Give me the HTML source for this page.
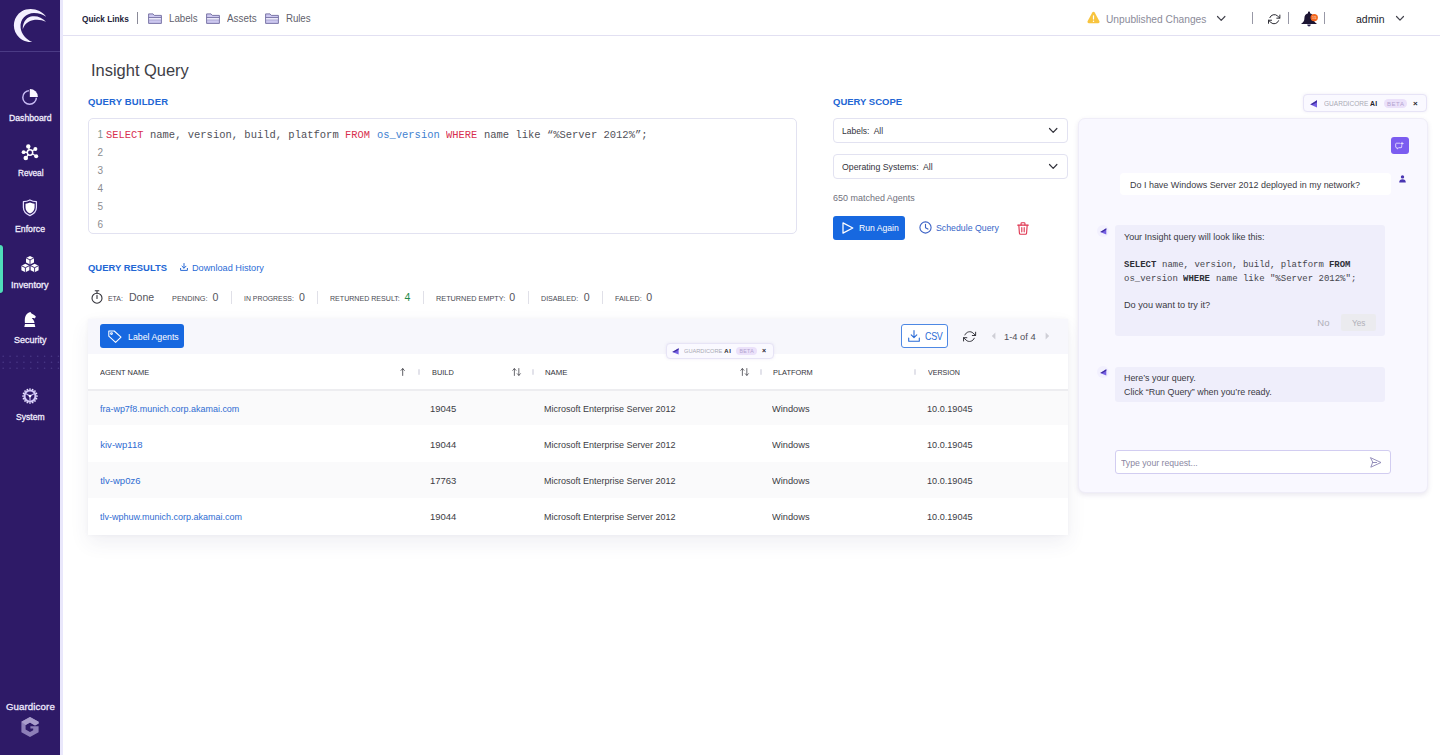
<!DOCTYPE html>
<html lang="en">
<head>
<meta charset="utf-8">
<title>Insight Query</title>
<style>
*{box-sizing:border-box;margin:0;padding:0}
html,body{width:1440px;height:755px;overflow:hidden;background:#fff}
body{font-family:"Liberation Sans",sans-serif;color:#3a3a44;font-size:9px;position:relative}
.t{position:absolute;white-space:pre;line-height:1;display:block;transform-origin:0 0}
.a{position:absolute}
svg{position:absolute;overflow:visible}
#side{position:absolute;left:0;top:0;width:60px;height:755px;background:#2e1a67}
#sidesh{position:absolute;left:60px;top:0;width:3px;height:755px;background:#e9e7fb}
#top{position:absolute;left:63px;top:0;width:1377px;height:36px;background:#fff;border-bottom:1px solid #e2e0f2}
.box{position:absolute;border:1px solid #e2e2f1;border-radius:4px;background:#fff}
.btn{position:absolute;background:#1768e0;border-radius:3px}
.sep{position:absolute;width:1px;background:#e0e0e8}
.row{position:absolute;left:88px;width:980px;height:36px}
</style>
</head>
<body>
<nav>
<div id="side">
<svg width="60" height="52" viewBox="0 0 60 52" style="left:0;top:0">
<path d="M46.2 16.8 C41 9.5 30 6.5 21.5 11.5 C13.5 16.5 11.5 27 17 35 C20.5 40 26.5 42.6 32.2 42 C26 39.5 21.3 34 20.6 27.5 C19.8 19 26 13 34 12.9 C38.8 12.9 43 14.4 46.2 16.8 Z" fill="#f4f0ff"/>
<path d="M46 21.8 C42 17.2 36 15.2 30.8 16.6 C25.5 18.2 22.4 23.6 22.8 29.6 C24 24.6 27.6 21.4 32.6 20.2 C37.4 19.2 42 19.8 46 21.8 Z" fill="#f4f0ff"/>
</svg>
<div class="a" style="left:0;top:51px;width:60px;height:1px;background:#4b3b85"></div>
<div class="a" style="left:0;top:245px;width:3.4px;height:47.5px;background:#4fdcba;border-radius:0 3px 3px 0;box-shadow:0 0 1.5px rgba(20,10,50,.8)"></div>
<svg width="20" height="20" viewBox="0 0 20 20" style="left:20px;top:87px">
<circle cx="9.6" cy="10.4" r="6.8" fill="none" stroke="#c9bcf5" stroke-width="1.45"/>
<path d="M9.8 2 A7.9 7.9 0 0 1 17.9 9.9 L9.8 9.9 Z" fill="#fbf8ff" stroke="#2e1a67" stroke-width="1.5" paint-order="stroke"/>
</svg>
<svg width="20" height="20" viewBox="0 0 20 20" style="left:20px;top:142px">
<g stroke="#fff" stroke-width="1.3" fill="none">
<line x1="10" y1="10.5" x2="8.3" y2="4.3"/><line x1="10" y1="10.5" x2="15.6" y2="6.8"/><line x1="10" y1="10.5" x2="16.5" y2="14.3"/><line x1="10" y1="10.5" x2="5.6" y2="16.2"/><line x1="10" y1="10.5" x2="3.3" y2="10.2"/>
</g>
<circle cx="10" cy="10.5" r="2.7" fill="#2e1a67" stroke="#fff" stroke-width="1.5"/>
<g fill="#fff"><circle cx="8.3" cy="4.4" r="2.2"/><circle cx="15.4" cy="7" r="2"/><circle cx="16.2" cy="14.2" r="2"/><circle cx="5.8" cy="16" r="2.3"/><circle cx="3.6" cy="10.2" r="1.9"/></g>
</svg>
<svg width="20" height="20" viewBox="0 0 20 20" style="left:20px;top:198px">
<path d="M9.9 2 C11.8 3 14 3.6 16.4 3.7 L16.4 9.6 C16.4 13.2 13.8 16 9.9 17.6 C6 16 3.4 13.2 3.4 9.6 L3.4 3.7 C5.8 3.6 8 3 9.9 2 Z" fill="none" stroke="#e6deff" stroke-width="1.25" stroke-linejoin="round"/>
<path d="M10 4.5 C11.4 5.2 13 5.6 14.6 5.7 L14.6 9.6 C14.6 12.2 12.9 14.3 10 15.6 C7.1 14.3 5.5 12.2 5.5 9.6 L5.5 5.7 C7 5.6 8.6 5.2 10 4.5 Z" fill="#fff"/>
</svg>
<svg width="22" height="20" viewBox="0 0 22 20" style="left:19px;top:254.6px"><path d="M7 2.9 l4 -2 l4 2 v4.6 l-4 2 l-4 -2 Z" fill="#fff"/><path d="M7 2.9 l4 2 l4 -2 M11 4.9 v4.6" fill="none" stroke="#2e1a67" stroke-width="0.9"/><path d="M2.4 10.7 l4 -2 l4 2 v4.6 l-4 2 l-4 -2 Z" fill="#fff"/><path d="M2.4 10.7 l4 2 l4 -2 M6.4 12.7 v4.6" fill="none" stroke="#2e1a67" stroke-width="0.9"/><path d="M11.6 10.7 l4 -2 l4 2 v4.6 l-4 2 l-4 -2 Z" fill="#fff"/><path d="M11.6 10.7 l4 2 l4 -2 M15.6 12.7 v4.6" fill="none" stroke="#2e1a67" stroke-width="0.9"/></svg>
<svg width="12" height="15.2" viewBox="0 0 12 15.2" style="left:24px;top:312px">
<path d="M6.4 0 L7.5 1.5 C9.5 2.3 11 3.5 11.9 4.8 L10.7 6.5 C9.7 6.2 8.7 6 7.8 6.2 C9.4 7.6 10.4 9.2 10.5 11 L0.9 11 C0.6 8 0.8 5.4 1.8 3.6 C2.8 1.8 4.4 0.6 6.4 0 Z" fill="#fff"/>
<path d="M1 11.9 H10.6 L11.3 15 H0.3 Z" fill="#fff"/>
</svg>
<svg width="60" height="20" viewBox="0 350 60 20" style="left:0;top:350px"><g fill="#4a3987"><circle cx="3.2" cy="356.3" r="0.8"/><circle cx="10.1" cy="356.3" r="0.8"/><circle cx="17" cy="356.3" r="0.8"/><circle cx="23.9" cy="356.3" r="0.8"/><circle cx="30.8" cy="356.3" r="0.8"/><circle cx="37.7" cy="356.3" r="0.8"/><circle cx="44.6" cy="356.3" r="0.8"/><circle cx="51.5" cy="356.3" r="0.8"/><circle cx="58.4" cy="356.3" r="0.8"/><circle cx="3.2" cy="362.3" r="0.8"/><circle cx="10.1" cy="362.3" r="0.8"/><circle cx="17" cy="362.3" r="0.8"/><circle cx="23.9" cy="362.3" r="0.8"/><circle cx="30.8" cy="362.3" r="0.8"/><circle cx="37.7" cy="362.3" r="0.8"/><circle cx="44.6" cy="362.3" r="0.8"/><circle cx="51.5" cy="362.3" r="0.8"/><circle cx="58.4" cy="362.3" r="0.8"/><circle cx="3.2" cy="368.3" r="0.8"/><circle cx="10.1" cy="368.3" r="0.8"/><circle cx="17" cy="368.3" r="0.8"/><circle cx="23.9" cy="368.3" r="0.8"/><circle cx="30.8" cy="368.3" r="0.8"/><circle cx="37.7" cy="368.3" r="0.8"/><circle cx="44.6" cy="368.3" r="0.8"/><circle cx="51.5" cy="368.3" r="0.8"/><circle cx="58.4" cy="368.3" r="0.8"/></g></svg>
<svg width="16" height="16" viewBox="0 0 16 16" style="left:22px;top:387.6px">
<g fill="#ece6ff"><circle cx="15.00" cy="8.00" r="0.85"/><circle cx="14.47" cy="10.68" r="0.85"/><circle cx="12.95" cy="12.95" r="0.85"/><circle cx="10.68" cy="14.47" r="0.85"/><circle cx="8.00" cy="15.00" r="0.85"/><circle cx="5.32" cy="14.47" r="0.85"/><circle cx="3.05" cy="12.95" r="0.85"/><circle cx="1.53" cy="10.68" r="0.85"/><circle cx="1.00" cy="8.00" r="0.85"/><circle cx="1.53" cy="5.32" r="0.85"/><circle cx="3.05" cy="3.05" r="0.85"/><circle cx="5.32" cy="1.53" r="0.85"/><circle cx="8.00" cy="1.00" r="0.85"/><circle cx="10.68" cy="1.53" r="0.85"/><circle cx="12.95" cy="3.05" r="0.85"/><circle cx="14.47" cy="5.32" r="0.85"/></g>
<circle cx="8" cy="8" r="5.5" fill="none" stroke="#d2c8f7" stroke-width="2.1"/>
<g stroke="#cbbff3" stroke-width="1.2"><line x1="8" y1="8" x2="4.02" y2="5.70"/><line x1="8" y1="8" x2="11.98" y2="5.70"/><line x1="8" y1="8" x2="8.00" y2="12.60"/></g>
<circle cx="8" cy="8" r="1.3" fill="#fff"/>
</svg>
<svg width="20" height="22" viewBox="0 0 20 22" style="left:20px;top:715.5px">
<path d="M10 1 L18.6 5.8 L18.6 7.6 L15 9.4 L10 6.6 L5.6 9 L5.6 13.6 L10 16 L13.2 14.2 L13.2 12.6 L10.4 12.6 L10.4 10.2 L18.6 10.2 L18.6 16.2 L10 21 L1.4 16.2 L1.4 5.8 Z" fill="#8d7fb8"/>
<path d="M10 1 L18.6 5.8 L18.6 7.6 L15 9.4 L10 6.6 L5.6 9 L1.4 5.8 Z" fill="#a99dcb"/>
</svg>
</div>
<div id="sidesh"></div>
<span id="t1" class="t" style="left:9.00px;top:113.00px;font-size:9.6px;color:#f3efff;transform:scaleX(0.9055);-webkit-text-stroke:0.3px #f3efff;">Dashboard</span>
<span id="t2" class="t" style="left:17.50px;top:168.00px;font-size:9.6px;color:#f3efff;letter-spacing:-0.045px;transform:scaleX(0.8600);-webkit-text-stroke:0.3px #f3efff;">Reveal</span>
<span id="t3" class="t" style="left:15.40px;top:224.00px;font-size:9.6px;color:#f3efff;transform:scaleX(0.9100);-webkit-text-stroke:0.3px #f3efff;">Enforce</span>
<span id="t4" class="t" style="left:11.20px;top:280.00px;font-size:9.6px;color:#f3efff;transform:scaleX(0.9552);-webkit-text-stroke:0.3px #f3efff;">Inventory</span>
<span id="t5" class="t" style="left:14.10px;top:335.00px;font-size:9.6px;color:#f3efff;transform:scaleX(0.9378);-webkit-text-stroke:0.3px #f3efff;">Security</span>
<span id="t6" class="t" style="left:15.80px;top:412.00px;font-size:9.6px;color:#f3efff;transform:scaleX(0.8937);-webkit-text-stroke:0.3px #f3efff;">System</span>
<span id="t7" class="t" style="left:5.90px;top:702.00px;font-size:9.7px;color:#efeaff;letter-spacing:0.107px;-webkit-text-stroke:0.3px #efeaff;">Guardicore</span>
</nav>
<header>
<div id="top"></div>
<span id="t8" class="t" style="left:81.80px;top:14.00px;font-size:9.4px;color:#23233a;font-weight:bold;transform:scaleX(0.8804);">Quick Links</span>
<div class="a" style="left:137px;top:12px;width:1px;height:11.5px;background:#8a8a98"></div>
<svg width="14" height="11" viewBox="0 0 14 11" style="left:148px;top:12.5px">
<path d="M0.6 10.4 V0.9 H5 L6.3 2.4 H13.4 V10.4 Z" fill="#cdc8f0" stroke="#6f6a9e" stroke-width="0.9" stroke-linejoin="round"/>
<path d="M0.6 4.6 H13.4" stroke="#6f6a9e" stroke-width="0.9"/>
<path d="M1.1 5.1 H12.9 V6.6 H1.1 Z" fill="#f1effb"/>
<path d="M0.6 7 H13.4" stroke="#8d88b8" stroke-width="0.5"/>
</svg>
<span id="t9" class="t" style="left:169.40px;top:13.00px;font-size:11.3px;color:#5f5f6c;letter-spacing:-0.008px;transform:scaleX(0.8600);">Labels</span>
<svg width="14" height="11" viewBox="0 0 14 11" style="left:206px;top:12.5px">
<path d="M0.6 10.4 V0.9 H5 L6.3 2.4 H13.4 V10.4 Z" fill="#cdc8f0" stroke="#6f6a9e" stroke-width="0.9" stroke-linejoin="round"/>
<path d="M0.6 4.6 H13.4" stroke="#6f6a9e" stroke-width="0.9"/>
<path d="M1.1 5.1 H12.9 V6.6 H1.1 Z" fill="#f1effb"/>
<path d="M0.6 7 H13.4" stroke="#8d88b8" stroke-width="0.5"/>
</svg>
<span id="t10" class="t" style="left:227.10px;top:13.00px;font-size:11.3px;color:#5f5f6c;transform:scaleX(0.8730);">Assets</span>
<svg width="14" height="11" viewBox="0 0 14 11" style="left:265.3px;top:12.5px">
<path d="M0.6 10.4 V0.9 H5 L6.3 2.4 H13.4 V10.4 Z" fill="#cdc8f0" stroke="#6f6a9e" stroke-width="0.9" stroke-linejoin="round"/>
<path d="M0.6 4.6 H13.4" stroke="#6f6a9e" stroke-width="0.9"/>
<path d="M1.1 5.1 H12.9 V6.6 H1.1 Z" fill="#f1effb"/>
<path d="M0.6 7 H13.4" stroke="#8d88b8" stroke-width="0.5"/>
</svg>
<span id="t11" class="t" style="left:286.20px;top:13.00px;font-size:11.3px;color:#5f5f6c;letter-spacing:-0.101px;transform:scaleX(0.8600);">Rules</span>
<svg width="13" height="13" viewBox="0 0 13 13" style="left:1087px;top:11.3px">
<path d="M6.5 0.8 C7 0.8 7.4 1.1 7.7 1.6 L12.3 10 C12.9 11.1 12.3 12.2 11.1 12.2 H1.9 C0.7 12.2 0.1 11.1 0.7 10 L5.3 1.6 C5.6 1.1 6 0.8 6.5 0.8 Z" fill="#f8c43e"/>
<rect x="5.9" y="4.2" width="1.2" height="4.4" rx="0.6" fill="#fff"/><circle cx="6.5" cy="10.2" r="0.75" fill="#fff"/>
</svg>
<span id="t12" class="t" style="left:1105.50px;top:14.00px;font-size:11.3px;color:#8b8b99;transform:scaleX(0.9031);">Unpublished Changes</span>
<svg width="8.4" height="4.8" viewBox="0 0 8.4 4.8" style="left:1217px;top:15.6px"><path d="M0.5 0.5 L4.2 4.3 L7.9 0.5" fill="none" stroke="#44444e" stroke-width="1.2" stroke-linecap="round" stroke-linejoin="round"/></svg>
<div class="a" style="left:1252px;top:12px;width:1px;height:11.8px;background:#9898a6"></div>
<svg width="12.4" height="12.4" viewBox="0 0 24 24" style="left:1268.3px;top:13.2px">
<g fill="none" stroke="#2b2b33" stroke-width="1.93548" stroke-linecap="round" stroke-linejoin="round">
<path d="M23 4 V10 H17"/><path d="M1 20 V14 H7"/>
<path d="M3.51 9 A9 9 0 0 1 18.36 5.64 L23 10 M1 14 L5.64 18.36 A9 9 0 0 0 20.49 15"/>
</g></svg>
<div class="a" style="left:1288px;top:12px;width:1px;height:11.8px;background:#9898a6"></div>
<svg width="18" height="16" viewBox="0 0 18 16" style="left:1300.5px;top:10.6px">
<path d="M8 0.6 C8.6 0.6 9 1 9 1.6 V2.2 C11.4 2.8 12.6 4.8 12.6 7.2 C12.6 9.6 13.4 11 15.6 12.4 V13 H0.4 V12.4 C2.6 11 3.4 9.6 3.4 7.2 C3.4 4.8 4.6 2.8 7 2.2 V1.6 C7 1 7.4 0.6 8 0.6 Z" fill="#1c1533"/>
<path d="M6.2 13.6 H9.8 C9.8 14.7 9 15.4 8 15.4 C7 15.4 6.2 14.7 6.2 13.6 Z" fill="#2b2350"/>
<circle cx="13.2" cy="6.6" r="3.7" fill="#f2661f"/>
</svg>
<span id="t13" class="t" style="left:1311.80px;top:16.00px;font-size:4.2px;color:#ffc4a0;font-weight:bold;transform:scaleX(0.9204);">15</span>
<div class="a" style="left:1324px;top:12px;width:1px;height:11.8px;background:#9898a6"></div>
<span id="t14" class="t" style="left:1356.00px;top:14.00px;font-size:11.3px;color:#23232b;transform:scaleX(0.9259);">admin</span>
<svg width="8" height="4.6" viewBox="0 0 8 4.6" style="left:1395.6px;top:15.6px"><path d="M0.5 0.5 L4 4.1 L7.5 0.5" fill="none" stroke="#44444e" stroke-width="1.2" stroke-linecap="round" stroke-linejoin="round"/></svg>
</header>
<main>
<section>
<span id="t15" class="t" style="left:91.00px;top:62.00px;font-size:17px;color:#3e3e46;transform:scaleX(0.9673);">Insight Query</span>
<span id="t16" class="t" style="left:88.00px;top:97.00px;font-size:9.5px;color:#2266d4;font-weight:bold;letter-spacing:0.156px;">QUERY BUILDER</span>
<div class="box" style="left:88px;top:118px;width:709px;height:116px;border-radius:5px;border-color:#e2e2f1"></div>
<span id="t17" class="t" style="left:97.40px;top:130.00px;font-size:10px;color:#7b9690;">1</span>
<span id="t18" class="t" style="left:97.40px;top:148.00px;font-size:10px;color:#8c8c90;">2</span>
<span id="t19" class="t" style="left:97.40px;top:166.00px;font-size:10px;color:#8c8c90;">3</span>
<span id="t20" class="t" style="left:97.40px;top:184.00px;font-size:10px;color:#8c8c90;">4</span>
<span id="t21" class="t" style="left:97.40px;top:202.00px;font-size:10px;color:#8c8c90;">5</span>
<span id="t22" class="t" style="left:97.40px;top:220.00px;font-size:10px;color:#8c8c90;">6</span>
<span id="t23" class="t" style="left:105.80px;top:130.00px;font-size:10.5px;color:#d82f4f;font-family:'Liberation Mono',monospace;transform:scaleX(0.9917);">SELECT</span>
<span id="t24" class="t" style="left:149.90px;top:130.00px;font-size:10.5px;color:#505058;font-family:'Liberation Mono',monospace;transform:scaleX(0.9982);">name, version, build, platform</span>
<span id="t25" class="t" style="left:345.20px;top:130.00px;font-size:10.5px;color:#d82f4f;font-family:'Liberation Mono',monospace;transform:scaleX(0.9874);">FROM</span>
<span id="t26" class="t" style="left:376.70px;top:130.00px;font-size:10.5px;color:#3f7fd0;font-family:'Liberation Mono',monospace;transform:scaleX(0.9950);">os_version</span>
<span id="t27" class="t" style="left:446.00px;top:130.00px;font-size:10.5px;color:#d82f4f;font-family:'Liberation Mono',monospace;transform:scaleX(0.9900);">WHERE</span>
<span id="t28" class="t" style="left:483.80px;top:130.00px;font-size:10.5px;color:#505058;font-family:'Liberation Mono',monospace;transform:scaleX(0.9980);">name like “%Server 2012%”;</span>
<span id="t29" class="t" style="left:832.90px;top:97.00px;font-size:9.5px;color:#2266d4;font-weight:bold;transform:scaleX(0.9990);">QUERY SCOPE</span>
<div class="box" style="left:833px;top:118px;width:235px;height:25px"></div>
<span id="t30" class="t" style="left:841.90px;top:126.00px;font-size:9.5px;color:#33333c;transform:scaleX(0.8944);">Labels:  All</span>
<svg width="8.4" height="4.8" viewBox="0 0 8.4 4.8" style="left:1049px;top:128.2px"><path d="M0.5 0.5 L4.2 4.3 L7.9 0.5" fill="none" stroke="#33333c" stroke-width="1.2" stroke-linecap="round" stroke-linejoin="round"/></svg>
<div class="box" style="left:833px;top:154px;width:235px;height:25px"></div>
<span id="t31" class="t" style="left:841.90px;top:162.00px;font-size:9.5px;color:#33333c;transform:scaleX(0.9176);">Operating Systems:  All</span>
<svg width="8.4" height="4.8" viewBox="0 0 8.4 4.8" style="left:1049px;top:164.2px"><path d="M0.5 0.5 L4.2 4.3 L7.9 0.5" fill="none" stroke="#33333c" stroke-width="1.2" stroke-linecap="round" stroke-linejoin="round"/></svg>
<span id="t32" class="t" style="left:832.90px;top:193.00px;font-size:9.5px;color:#70707c;transform:scaleX(0.9443);">650 matched Agents</span>
<div class="btn" style="left:832.5px;top:216px;width:72px;height:24px"></div>
<svg width="12" height="12" viewBox="0 0 12 12" style="left:841.6px;top:222.2px"><path d="M1 0.9 L10.8 6 L1 11.1 Z" fill="none" stroke="#fff" stroke-width="1.25" stroke-linejoin="round"/></svg>
<span id="t33" class="t" style="left:858.50px;top:223.00px;font-size:9.5px;color:#fff;transform:scaleX(0.9078);">Run Again</span>
<svg width="13" height="13" viewBox="0 0 13 13" style="left:918.8px;top:221.4px"><circle cx="6.5" cy="6.5" r="5.6" fill="none" stroke="#3d63c6" stroke-width="1.1"/><path d="M6.5 3.2 V6.7 L8.9 8.1" fill="none" stroke="#3d63c6" stroke-width="1.1" stroke-linecap="round" stroke-linejoin="round"/></svg>
<span id="t34" class="t" style="left:936.30px;top:223.00px;font-size:9.5px;color:#3565c8;transform:scaleX(0.9218);">Schedule Query</span>
<svg width="12" height="13" viewBox="0 0 13 14" style="left:1017.2px;top:221.8px">
<g fill="none" stroke="#df3550" stroke-width="1.2" stroke-linecap="round" stroke-linejoin="round">
<path d="M0.8 3.4 H12.2"/><path d="M4.4 3.2 V1.6 C4.4 1.1 4.7 0.8 5.2 0.8 H7.8 C8.3 0.8 8.6 1.1 8.6 1.6 V3.2"/>
<path d="M2 3.6 L2.6 12 C2.65 12.8 3.1 13.2 3.9 13.2 H9.1 C9.9 13.2 10.35 12.8 10.4 12 L11 3.6"/>
<path d="M5.2 6 V10.6 M7.8 6 V10.6"/></g></svg>
<span id="t35" class="t" style="left:88.00px;top:263.00px;font-size:9.5px;color:#2266d4;font-weight:bold;transform:scaleX(0.9933);">QUERY RESULTS</span>
<svg width="8" height="8" viewBox="0 0 8 8" style="left:179.6px;top:263.4px"><g fill="none" stroke="#2a6bd6" stroke-width="1" stroke-linecap="round" stroke-linejoin="round"><path d="M4 0.5 V5 M2 3.2 L4 5.2 L6 3.2"/><path d="M0.6 5.4 V7.4 H7.4 V5.4"/></g></svg>
<span id="t36" class="t" style="left:192.00px;top:263.00px;font-size:9.5px;color:#2a6bd6;transform:scaleX(0.9644);">Download History</span>
<svg width="12" height="14" viewBox="0 0 12 14" style="left:90.6px;top:290.2px"><g fill="none" stroke="#33333b" stroke-width="1.1" stroke-linecap="round">
<circle cx="6" cy="8.2" r="5"/><path d="M4.2 0.8 H7.8 M6 1 V3 M6 5.4 V8.4"/></g></svg>
<span id="t37" class="t" style="left:108.40px;top:295.00px;font-size:7.8px;color:#4a4a52;transform:scaleX(0.8887);">ETA:</span>
<span id="t38" class="t" style="left:128.80px;top:292.00px;font-size:10.6px;color:#55555c;transform:scaleX(0.9949);">Done</span>
<span id="t39" class="t" style="left:172.00px;top:295.00px;font-size:7.8px;color:#4a4a52;transform:scaleX(0.9442);">PENDING:</span>
<span id="t40" class="t" style="left:212.60px;top:292.00px;font-size:10.6px;color:#55555c;">0</span>
<div class="sep" style="left:231.2px;top:291px;height:12.5px"></div>
<span id="t41" class="t" style="left:243.80px;top:295.00px;font-size:7.8px;color:#4a4a52;transform:scaleX(0.8841);">IN PROGRESS:</span>
<span id="t42" class="t" style="left:298.90px;top:292.00px;font-size:10.6px;color:#55555c;">0</span>
<div class="sep" style="left:317.3px;top:291px;height:12.5px"></div>
<span id="t43" class="t" style="left:330.00px;top:295.00px;font-size:7.8px;color:#4a4a52;transform:scaleX(0.9069);">RETURNED RESULT:</span>
<span id="t44" class="t" style="left:404.50px;top:292.00px;font-size:10.6px;color:#1f8a4c;">4</span>
<div class="sep" style="left:422.8px;top:291px;height:12.5px"></div>
<span id="t45" class="t" style="left:435.50px;top:295.00px;font-size:7.8px;color:#4a4a52;transform:scaleX(0.9355);">RETURNED EMPTY:</span>
<span id="t46" class="t" style="left:509.30px;top:292.00px;font-size:10.6px;color:#55555c;">0</span>
<div class="sep" style="left:527.8px;top:291px;height:12.5px"></div>
<span id="t47" class="t" style="left:540.80px;top:295.00px;font-size:7.8px;color:#4a4a52;transform:scaleX(0.9132);">DISABLED:</span>
<span id="t48" class="t" style="left:583.80px;top:292.00px;font-size:10.6px;color:#55555c;">0</span>
<div class="sep" style="left:602px;top:291px;height:12.5px"></div>
<span id="t49" class="t" style="left:615.00px;top:295.00px;font-size:7.8px;color:#4a4a52;transform:scaleX(0.9226);">FAILED:</span>
<span id="t50" class="t" style="left:646.30px;top:292.00px;font-size:10.6px;color:#55555c;">0</span>
</section>
<section>
<div class="a" style="left:88px;top:318.5px;width:980px;height:216px;background:#fff;box-shadow:0 8px 18px rgba(60,60,110,.08),0 0 4px rgba(60,60,110,.04)"></div>
<div class="a" style="left:88px;top:318.5px;width:980px;height:35.5px;background:#f7f7fc"></div>
<div class="a" style="left:88px;top:389.4px;width:980px;height:1.4px;background:#ededf0"></div>
<div class="row" style="top:390.8px;height:34.4px;background:#fafafb"></div>
<div class="row" style="top:462px;background:#fafafb"></div>
<div class="btn" style="left:100px;top:324.2px;width:84px;height:23.8px"></div>
<svg width="14" height="13" viewBox="0 0 14 13" style="left:107.8px;top:329.6px"><g fill="none" stroke="#fff" stroke-width="1.05" stroke-linejoin="round"><path d="M0.8 1 H6.2 L13 7.2 L7.6 12.4 L0.8 6.2 Z"/><circle cx="3.5" cy="3.6" r="0.9"/></g></svg>
<span id="t51" class="t" style="left:127.50px;top:332.00px;font-size:9.5px;color:#fff;transform:scaleX(0.9238);">Label Agents</span>
<div class="a" style="left:900.7px;top:324.2px;width:47.5px;height:24px;background:#fff;border:1px solid #4d88e4;border-radius:3px"></div>
<svg width="12" height="12" viewBox="0 0 12 12" style="left:908.2px;top:330.2px"><g fill="none" stroke="#2a6bd6" stroke-width="1.1" stroke-linecap="round" stroke-linejoin="round"><path d="M6 0.6 V7.4 M3.2 4.8 L6 7.6 L8.8 4.8"/><path d="M0.7 8 V11.3 H11.3 V8"/></g></svg>
<span id="t52" class="t" style="left:924.90px;top:332.00px;font-size:10.4px;color:#2a6bd6;letter-spacing:-0.339px;transform:scaleX(0.8600);">CSV</span>
<svg width="13.2" height="13.2" viewBox="0 0 24 24" style="left:963.3px;top:329.5px">
<g fill="none" stroke="#2b2b33" stroke-width="1.72727" stroke-linecap="round" stroke-linejoin="round">
<path d="M23 4 V10 H17"/><path d="M1 20 V14 H7"/>
<path d="M3.51 9 A9 9 0 0 1 18.36 5.64 L23 10 M1 14 L5.64 18.36 A9 9 0 0 0 20.49 15"/>
</g></svg>
<svg width="5" height="8" viewBox="0 0 5 8" style="left:991.4px;top:332px"><path d="M4.4 0.6 L0.8 4 L4.4 7.4 Z" fill="#cfcfd6"/></svg>
<span id="t53" class="t" style="left:1004.40px;top:332.00px;font-size:9.5px;color:#50505a;transform:scaleX(0.9839);">1-4 of 4</span>
<svg width="5" height="8" viewBox="0 0 5 8" style="left:1044.6px;top:332px"><path d="M0.6 0.6 L4.2 4 L0.6 7.4 Z" fill="#cfcfd6"/></svg>
<span id="t54" class="t" style="left:100.00px;top:369.00px;font-size:8.1px;color:#33333b;transform:scaleX(0.9199);">AGENT NAME</span>
<svg width="5.4" height="8" viewBox="0 0 6 9" style="left:399.6px;top:368px"><g fill="none" stroke="#33333b" stroke-width="0.9" stroke-linecap="round" stroke-linejoin="round"><path d="M3 8.4 V0.8 M1.1 2.7 L3 0.7 L4.9 2.7"/></g></svg>
<div class="a" style="left:418.2px;top:368.6px;width:1.6px;height:6px;background:#e2e2ea;border-radius:1px"></div>
<span id="t55" class="t" style="left:431.90px;top:369.00px;font-size:8.1px;color:#33333b;transform:scaleX(0.9143);">BUILD</span>
<svg width="9.4" height="8" viewBox="0 0 10 9" style="left:512px;top:368px"><g fill="none" stroke="#3b3b43" stroke-width="0.85" stroke-linecap="round" stroke-linejoin="round"><path d="M2.4 8.4 V0.8 M0.6 2.6 L2.4 0.7 L4.2 2.6"/><path d="M7.4 0.6 V8.2 M5.6 6.4 L7.4 8.3 L9.2 6.4"/></g></svg>
<div class="a" style="left:532px;top:368.6px;width:1.6px;height:6px;background:#e2e2ea;border-radius:1px"></div>
<span id="t56" class="t" style="left:545.20px;top:369.00px;font-size:8.1px;color:#33333b;transform:scaleX(0.9619);">NAME</span>
<svg width="9.4" height="8" viewBox="0 0 10 9" style="left:740.2px;top:368px"><g fill="none" stroke="#3b3b43" stroke-width="0.85" stroke-linecap="round" stroke-linejoin="round"><path d="M2.4 8.4 V0.8 M0.6 2.6 L2.4 0.7 L4.2 2.6"/><path d="M7.4 0.6 V8.2 M5.6 6.4 L7.4 8.3 L9.2 6.4"/></g></svg>
<div class="a" style="left:760px;top:368.6px;width:1.6px;height:6px;background:#e2e2ea;border-radius:1px"></div>
<span id="t57" class="t" style="left:773.40px;top:369.00px;font-size:8.1px;color:#33333b;transform:scaleX(0.9133);">PLATFORM</span>
<div class="a" style="left:914.2px;top:368.6px;width:1.6px;height:6px;background:#e2e2ea;border-radius:1px"></div>
<span id="t58" class="t" style="left:927.80px;top:369.00px;font-size:8.1px;color:#33333b;transform:scaleX(0.8782);">VERSION</span>
<span id="t59" class="t" style="left:100.20px;top:404.00px;font-size:9.5px;color:#2f6cd2;transform:scaleX(0.9422);">fra-wp7f8.munich.corp.akamai.com</span>
<span id="t60" class="t" style="left:430.10px;top:404.00px;font-size:9.5px;color:#3c3c44;transform:scaleX(0.9992);">19045</span>
<span id="t61" class="t" style="left:544.00px;top:404.00px;font-size:9.5px;color:#3c3c44;transform:scaleX(0.9476);">Microsoft Enterprise Server 2012</span>
<span id="t62" class="t" style="left:772.20px;top:404.00px;font-size:9.5px;color:#3c3c44;transform:scaleX(0.9754);">Windows</span>
<span id="t63" class="t" style="left:926.70px;top:404.00px;font-size:9.5px;color:#3c3c44;transform:scaleX(0.9591);">10.0.19045</span>
<span id="t64" class="t" style="left:100.20px;top:440.00px;font-size:9.5px;color:#2f6cd2;letter-spacing:0.028px;">kiv-wp118</span>
<span id="t65" class="t" style="left:430.10px;top:440.00px;font-size:9.5px;color:#3c3c44;transform:scaleX(0.9992);">19044</span>
<span id="t66" class="t" style="left:544.00px;top:440.00px;font-size:9.5px;color:#3c3c44;transform:scaleX(0.9476);">Microsoft Enterprise Server 2012</span>
<span id="t67" class="t" style="left:772.20px;top:440.00px;font-size:9.5px;color:#3c3c44;transform:scaleX(0.9754);">Windows</span>
<span id="t68" class="t" style="left:926.70px;top:440.00px;font-size:9.5px;color:#3c3c44;transform:scaleX(0.9591);">10.0.19045</span>
<span id="t69" class="t" style="left:100.20px;top:476.00px;font-size:9.5px;color:#2f6cd2;letter-spacing:0.022px;">tlv-wp0z6</span>
<span id="t70" class="t" style="left:430.10px;top:476.00px;font-size:9.5px;color:#3c3c44;transform:scaleX(0.9992);">17763</span>
<span id="t71" class="t" style="left:544.00px;top:476.00px;font-size:9.5px;color:#3c3c44;transform:scaleX(0.9476);">Microsoft Enterprise Server 2012</span>
<span id="t72" class="t" style="left:772.20px;top:476.00px;font-size:9.5px;color:#3c3c44;transform:scaleX(0.9754);">Windows</span>
<span id="t73" class="t" style="left:926.70px;top:476.00px;font-size:9.5px;color:#3c3c44;transform:scaleX(0.9591);">10.0.19045</span>
<span id="t74" class="t" style="left:100.20px;top:512.00px;font-size:9.5px;color:#2f6cd2;transform:scaleX(0.9463);">tlv-wphuw.munich.corp.akamai.com</span>
<span id="t75" class="t" style="left:430.10px;top:512.00px;font-size:9.5px;color:#3c3c44;transform:scaleX(0.9992);">19044</span>
<span id="t76" class="t" style="left:544.00px;top:512.00px;font-size:9.5px;color:#3c3c44;transform:scaleX(0.9476);">Microsoft Enterprise Server 2012</span>
<span id="t77" class="t" style="left:772.20px;top:512.00px;font-size:9.5px;color:#3c3c44;transform:scaleX(0.9754);">Windows</span>
<span id="t78" class="t" style="left:926.70px;top:512.00px;font-size:9.5px;color:#3c3c44;transform:scaleX(0.9591);">10.0.19045</span>
<div class="a" style="left:665.6px;top:343px;width:108.6px;height:16.2px;background:#faf9ff;border:1px solid #e7e4f6;border-radius:4px;box-shadow:0 0 3px rgba(120,110,180,.12)"></div>
<svg width="7.2" height="6.8" viewBox="0 0 8 8" preserveAspectRatio="none" style="left:672px;top:347.5px"><path d="M0.3 4.6 L7.4 0.3 L7.4 7.7 Z" fill="#7660e4"/><path d="M0.3 4.6 L7.4 0.3 L7.4 2.2 L2.6 4.9 Z" fill="#3f2e9e"/></svg>
<span id="t79" class="t" style="left:684.20px;top:349.00px;font-size:5.9px;color:#a9a9b4;transform:scaleX(0.9590);">GUARDICORE</span>
<span id="t80" class="t" style="left:724.20px;top:349.00px;font-size:5.9px;color:#23232b;font-weight:bold;letter-spacing:0.794px;">AI</span>
<div class="a" style="left:736.2px;top:346.8px;width:20.6px;height:8px;background:#ebe1fa;border-radius:4px"></div>
<span id="t81" class="t" style="left:739.40px;top:349.00px;font-size:5.2px;color:#b3a3cf;letter-spacing:0.376px;">BETA</span>
<span id="t82" class="t" style="left:762.00px;top:347.00px;font-size:7px;color:#23232b;font-weight:bold;">×</span>
</section>
</main>
<aside>
<div class="a" style="left:1303px;top:94px;width:123.5px;height:18px;background:#faf9ff;border:1px solid #e7e4f6;border-radius:4px;box-shadow:0 0 3px rgba(120,110,180,.12)"></div>
<svg width="7.6" height="7.8" viewBox="0 0 8 8" preserveAspectRatio="none" style="left:1310px;top:99.6px"><path d="M0.3 4.6 L7.4 0.3 L7.4 7.7 Z" fill="#7660e4"/><path d="M0.3 4.6 L7.4 0.3 L7.4 2.2 L2.6 4.9 Z" fill="#3f2e9e"/></svg>
<span id="t83" class="t" style="left:1323.70px;top:101.00px;font-size:6.8px;color:#a9a9b4;transform:scaleX(0.9614);">GUARDICORE</span>
<span id="t84" class="t" style="left:1369.90px;top:101.00px;font-size:6.8px;color:#23232b;font-weight:bold;letter-spacing:0.487px;">AI</span>
<div class="a" style="left:1384px;top:99.4px;width:23px;height:8.6px;background:#ebe1fa;border-radius:4.3px"></div>
<span id="t85" class="t" style="left:1387.00px;top:101.00px;font-size:6px;color:#b3a3cf;letter-spacing:0.555px;">BETA</span>
<span id="t86" class="t" style="left:1413.00px;top:100.00px;font-size:8px;color:#23232b;font-weight:bold;">×</span>
<div class="a" style="left:1078px;top:118px;width:349.5px;height:374.5px;background:#f9f8ff;border:1px solid #efedf8;border-radius:7px;box-shadow:0 2px 5px rgba(70,60,120,.12)"></div>
<div class="a" style="left:1390.8px;top:136.6px;width:17.8px;height:17.8px;background:#7b5cf0;border-radius:3px"></div>
<svg width="9" height="8" viewBox="0 0 9 8" style="left:1395.4px;top:141.6px"><g fill="none" stroke="#f1ecff" stroke-width="0.8" stroke-linejoin="round" stroke-linecap="round"><path d="M4.6 1.2 H1.4 C1 1.2 0.7 1.5 0.7 1.9 V5 C0.7 5.4 1 5.7 1.4 5.7 H2.2 V7 L3.8 5.7 H6 C6.4 5.7 6.7 5.4 6.7 5 V3.6"/><path d="M7 0.3 V2.7 M5.8 1.5 H8.2"/></g></svg>
<div class="a" style="left:1120.2px;top:172.8px;width:270.8px;height:22.5px;background:#fff;border-radius:4px"></div>
<span id="t87" class="t" style="left:1129.50px;top:180.00px;font-size:9.5px;color:#3a3a44;transform:scaleX(0.9427);">Do I have Windows Server 2012 deployed in my network?</span>
<svg width="7" height="8" viewBox="0 0 7 8" style="left:1399.3px;top:175px"><circle cx="3.5" cy="1.9" r="1.7" fill="#4a36b2"/><path d="M0.2 7.6 C0.2 5.2 1.6 4.2 3.5 4.2 C5.4 4.2 6.8 5.2 6.8 7.6 Z" fill="#4a36b2"/></svg>
<div class="a" style="left:1114.6px;top:225.3px;width:270.5px;height:110.7px;background:#efeefb;border-radius:3px"></div>
<div class="a" style="left:1096.8px;top:225.2px;width:12px;height:12px;border-radius:6px;background:#f2f0fe"></div>
<svg width="6.8" height="6.8" viewBox="0 0 8 8" preserveAspectRatio="none" style="left:1099.5px;top:227.9px"><path d="M0.3 4.6 L7.4 0.3 L7.4 7.7 Z" fill="#7660e4"/><path d="M0.3 4.6 L7.4 0.3 L7.4 2.2 L2.6 4.9 Z" fill="#3f2e9e"/></svg>
<span id="t88" class="t" style="left:1124.00px;top:232.00px;font-size:9.5px;color:#3a3a44;transform:scaleX(0.9424);">Your Insight query will look like this:</span>
<span id="t89" class="t" style="left:1124.00px;top:261.00px;font-size:9px;color:#2e2e36;font-weight:bold;font-family:'Liberation Mono',monospace;transform:scaleX(0.9967);">SELECT</span>
<span id="t90" class="t" style="left:1161.80px;top:261.00px;font-size:9px;color:#46464e;font-family:'Liberation Mono',monospace;transform:scaleX(0.9992);">name, version, build, platform</span>
<span id="t91" class="t" style="left:1329.20px;top:261.00px;font-size:9px;color:#2e2e36;font-weight:bold;font-family:'Liberation Mono',monospace;transform:scaleX(0.9949);">FROM</span>
<span id="t92" class="t" style="left:1124.00px;top:275.00px;font-size:9px;color:#46464e;font-family:'Liberation Mono',monospace;transform:scaleX(0.9979);">os_version</span>
<span id="t93" class="t" style="left:1183.40px;top:275.00px;font-size:9px;color:#2e2e36;font-weight:bold;font-family:'Liberation Mono',monospace;transform:scaleX(0.9957);">WHERE</span>
<span id="t94" class="t" style="left:1215.80px;top:275.00px;font-size:9px;color:#46464e;font-family:'Liberation Mono',monospace;transform:scaleX(0.9990);">name like "%Server 2012%";</span>
<span id="t95" class="t" style="left:1124.00px;top:300.00px;font-size:9.5px;color:#3a3a44;transform:scaleX(0.9649);">Do you want to try it?</span>
<span id="t96" class="t" style="left:1317.30px;top:318.00px;font-size:9.5px;color:#b0b0b8;letter-spacing:0.144px;">No</span>
<div class="a" style="left:1341.3px;top:314.4px;width:34.3px;height:16.5px;background:#ebebef;border-radius:2px"></div>
<span id="t97" class="t" style="left:1352.20px;top:318.00px;font-size:9.5px;color:#b0b0b8;transform:scaleX(0.8645);">Yes</span>
<div class="a" style="left:1114.6px;top:366.5px;width:270.3px;height:35.5px;background:#efeefb;border-radius:3px"></div>
<div class="a" style="left:1096.9px;top:366.1px;width:12px;height:12px;border-radius:6px;background:#f2f0fe"></div>
<svg width="6.8" height="6.8" viewBox="0 0 8 8" preserveAspectRatio="none" style="left:1099.6px;top:368.8px"><path d="M0.3 4.6 L7.4 0.3 L7.4 7.7 Z" fill="#7660e4"/><path d="M0.3 4.6 L7.4 0.3 L7.4 2.2 L2.6 4.9 Z" fill="#3f2e9e"/></svg>
<span id="t98" class="t" style="left:1123.50px;top:373.00px;font-size:9.5px;color:#3a3a44;transform:scaleX(0.9349);">Here’s your query.</span>
<span id="t99" class="t" style="left:1123.50px;top:387.00px;font-size:9.5px;color:#3a3a44;transform:scaleX(0.9370);">Click “Run Query” when you’re ready.</span>
<div class="a" style="left:1114.5px;top:450.4px;width:276px;height:23.6px;background:#fff;border:1px solid #d2cdf1;border-radius:3px"></div>
<span id="t100" class="t" style="left:1121.00px;top:458.00px;font-size:9.5px;color:#8a87a2;transform:scaleX(0.9140);">Type your request...</span>
<svg width="12" height="11" viewBox="0 0 12 11" style="left:1369.8px;top:456.8px"><path d="M0.8 0.8 L11 5.5 L0.8 10.2 L2.6 5.5 Z M2.6 5.5 H6.6" fill="none" stroke="#8a84b4" stroke-width="0.9" stroke-linejoin="round" stroke-linecap="round"/></svg>
</aside>
</body>
</html>
